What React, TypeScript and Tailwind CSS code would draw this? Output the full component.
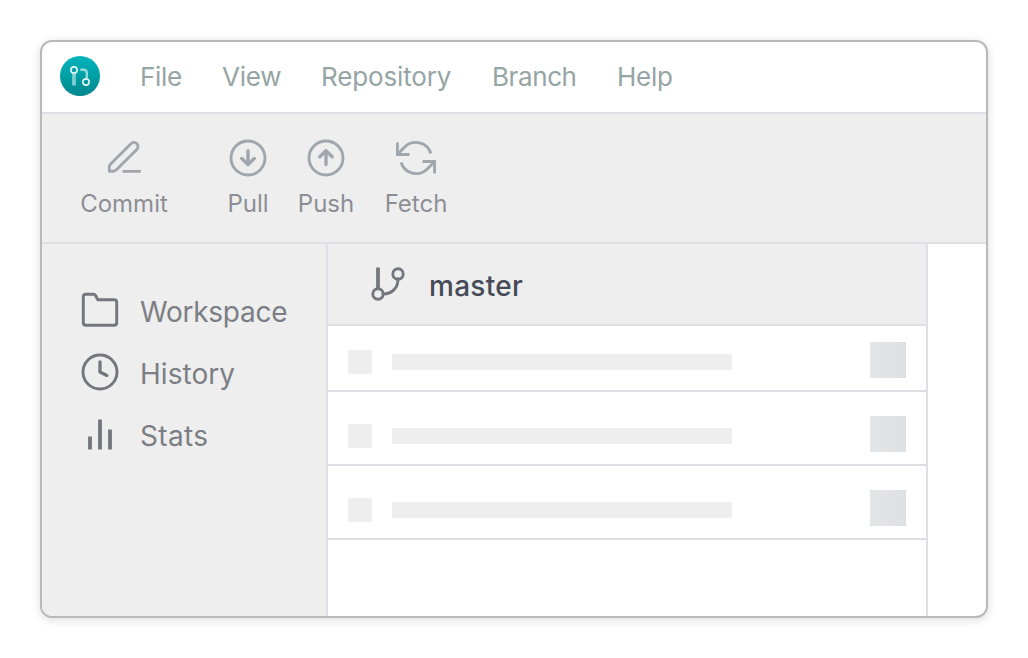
import type { ReactNode } from 'react';

const menuItems = [
  { label: 'File', className: 'w-[82px] tracking-[-0.3px]' },
  { label: 'View', className: 'w-[99px] tracking-[-0.2px]' },
  { label: 'Repository', className: 'w-[171px] tracking-[-0.15px]' },
  { label: 'Branch', className: 'w-[125px] tracking-[-0.4px]' },
  { label: 'Help', className: 'w-[70px] tracking-[-0.3px]' },
];

function Icon({ children, className = '', width = 2.9 }: { children: ReactNode; className?: string; width?: number }) {
  return (
    <svg
      viewBox="0 0 40 40"
      className={`size-10 shrink-0 ${className}`}
      fill="none"
      stroke="currentColor"
      strokeWidth={width}
      strokeLinecap="round"
      strokeLinejoin="round"
    >
      {children}
    </svg>
  );
}

function Logo() {
  return (
    <svg viewBox="0 0 40 40" className="size-10 shrink-0" fill="none">
      <defs>
        <linearGradient id="logo-fill" x1="0" y1="0" x2="0" y2="1">
          <stop offset="0" stopColor="#00b5bb" />
          <stop offset="1" stopColor="#00888d" />
        </linearGradient>
      </defs>
      <circle cx="20" cy="20" r="20" fill="url(#logo-fill)" />
      <path d="M14 17.5V29.5" stroke="#fff" strokeOpacity="0.5" strokeWidth="3.8" />
      <path d="M20.3 13.7H23.5Q26.8 13.7 26.8 17V22" stroke="#fff" strokeOpacity="0.6" strokeWidth="2.4" />
      <circle cx="14" cy="14" r="3.1" fill="#00a3a8" stroke="#fff" strokeOpacity="0.9" strokeWidth="1.6" />
      <circle cx="26" cy="26" r="3.1" fill="#00979c" stroke="#fff" strokeOpacity="0.9" strokeWidth="1.6" />
    </svg>
  );
}

function Tool({ label, className, children }: { label: string; className: string; children: ReactNode }) {
  return (
    <div className={`flex flex-col items-center ${className}`}>
      <Icon className="text-[#a1a6ad]">{children}</Icon>
      <span className="mt-[10px] whitespace-nowrap text-[24px] leading-8 text-[#8d8e95]">{label}</span>
    </div>
  );
}

function NavItem({ label, tracking, children }: { label: string; tracking: string; children: ReactNode }) {
  return (
    <div className="flex h-[62px] items-center gap-5 text-[#73767d]">
      <Icon className="-mt-1">{children}</Icon>
      <span className={`text-[28px] leading-9 text-[#7c7e85] ${tracking}`}>{label}</span>
    </div>
  );
}

function Row({ className }: { className: string }) {
  return (
    <div className={`flex items-end border-b-2 border-[#dfdfe5] pl-5 pr-5 pb-3 ${className}`}>
      <div className="mb-1 size-6 bg-[#eee]" />
      <div className="mb-2 ml-5 h-4 w-[340px] bg-[#eee]" />
      <div className="ml-auto size-9 bg-linear-to-r from-[#e4e5e7] to-[#dfe0e3]" />
    </div>
  );
}

export default function App() {
  return (
    <div className="h-[658px] w-[1028px] overflow-hidden bg-white p-10 font-['Inter',sans-serif]">
      <div className="flex h-[578px] w-[948px] flex-col overflow-hidden rounded-[12px] border-2 border-[#b9b9b9] bg-white shadow-[0_2px_10px_rgba(0,0,0,0.14)]">
        <header className="flex h-[72px] shrink-0 items-center border-b-2 border-[#dfdfe5] pb-[2px] pl-[18px]">
          <Logo />
          <nav className="ml-10 flex pt-[2px] text-[26px] leading-8 text-[#95a5a5]">
            {menuItems.map((item) => (
              <span key={item.label} className={item.className}>{item.label}</span>
            ))}
          </nav>
        </header>

        <div className="flex h-[130px] shrink-0 border-b-2 border-[#dfdfe5] bg-[#eee] pl-[38px] pt-6">
          <Tool label="Commit" className="w-[88px]">
            <path d="M5.3 33.3V29Q5.3 27.3 6.6 26L27 5.7A4.1 4.1 0 0 1 32.8 11.5L12.4 31.8Q11 33.1 9.3 33.2Z" />
            <path d="M18.5 33.4H36.7" strokeLinecap="butt" />
          </Tool>
          <Tool label="Pull" className="ml-[60px] w-10">
            <circle cx="20" cy="20" r="17" />
            <path d="M20 12.8V26.5M13.8 20.5L20 26.5L26.2 20.5" strokeWidth="3.4" />
          </Tool>
          <Tool label="Push" className="ml-[30px] w-14">
            <circle cx="20" cy="20" r="17" />
            <path d="M20 26.5V12.8M13.8 18.8L20 12.8L26.2 18.8" strokeWidth="3.4" />
          </Tool>
          <Tool label="Fetch" className="ml-[31px] w-[62px]">
            <path d="M1.4 4.5V16.5H13.5M1.4 16.5L8.7 9A15.8 15.8 0 0 1 34.9 15.5" strokeLinecap="butt" strokeLinejoin="miter" />
            <path d="M38.6 35.5V23.5H26.5M38.6 23.5L31.3 31A15.8 15.8 0 0 1 5.1 24.5" strokeLinecap="butt" strokeLinejoin="miter" />
          </Tool>
        </div>

        <div className="flex min-h-0 flex-1">
          <aside className="w-[286px] shrink-0 border-r-2 border-[#dfdfe5] bg-[#eee] pl-[38px] pt-[37px]">
            <NavItem label="Workspace" tracking="tracking-[-0.25px]">
              <path d="M3.3 6.8A2.5 2.5 0 0 1 5.8 4.3H13.6Q14.8 4.3 15.4 5.3L17.8 9.7H34.2A2.5 2.5 0 0 1 36.7 12.2V32.8A2.5 2.5 0 0 1 34.2 35.3H5.8A2.5 2.5 0 0 1 3.3 32.8Z" />
            </NavItem>
            <NavItem label="History" tracking="tracking-[0.05px]">
              <circle cx="20" cy="20" r="17" />
              <path d="M20 9.8V20L26.8 23.4" strokeWidth="3.3" />
            </NavItem>
            <NavItem label="Stats" tracking="tracking-[0.35px]">
              <path d="M10 22.5V35.5M20 5.5V35.5M30 15.5V35.5" strokeWidth="3.8" strokeLinecap="butt" />
            </NavItem>
          </aside>

          <main className="w-[600px] shrink-0 border-r-2 border-[#dfdfe5]">
            <div className="flex h-[82px] items-center border-b-2 border-[#dfdfe5] bg-[#eee] pl-10">
              <Icon className="text-[#73767d]">
                <path d="M10 3.5V25" strokeWidth="3.8" strokeLinecap="butt" />
                <circle cx="10" cy="30" r="5.2" />
                <circle cx="30" cy="10" r="5.2" />
                <path d="M30 15C30 24 24 30 15 30" />
              </Icon>
              <span className="ml-[21px] pt-1 text-[28px] font-medium leading-9 tracking-[0.3px] text-[#454c57]">master</span>
            </div>
            <Row className="h-[66px]" />
            <Row className="h-[74px]" />
            <Row className="h-[74px]" />
          </main>
        </div>
      </div>
    </div>
  );
}
